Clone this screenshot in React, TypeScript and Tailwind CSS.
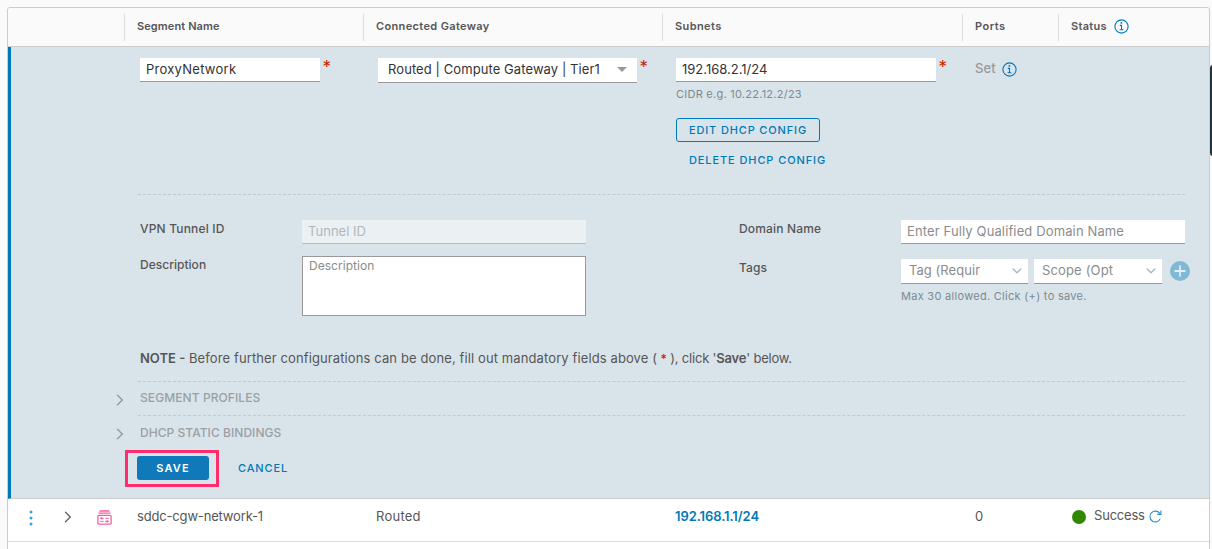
import type { ReactNode } from "react";

function InfoIcon() {
  return (
    <svg width="15" height="15" viewBox="0 0 15 15" fill="none" stroke="#0079b8" className="shrink-0">
      <circle cx="7.5" cy="7.5" r="6.6" strokeWidth="1.1" />
      <path d="M5.8 6.4H7.5V10.6M5.6 10.8H9.4" strokeWidth="1.1" />
      <circle cx="7.4" cy="3.9" r="0.9" fill="#0079b8" stroke="none" />
    </svg>
  );
}

function Chevron({ className }: { className: string }) {
  return (
    <svg width="8" height="12" viewBox="0 0 8 12" fill="none" className={className}>
      <path d="M1.5 1.3L6.3 6L1.5 10.7" stroke="currentColor" strokeWidth="1.4" strokeLinecap="round" />
    </svg>
  );
}

function DownChevron() {
  return (
    <svg width="10" height="6" viewBox="0 0 10 6" fill="none">
      <path d="M1.2 1L5 4.8L8.8 1" stroke="#a9b6be" strokeWidth="1.3" strokeLinecap="round" />
    </svg>
  );
}

function SegmentIcon() {
  return (
    <svg width="15" height="15" viewBox="0 0 15 15" fill="none" stroke="#f4609f">
      <path d="M2.5 1H12.5M1.5 3.2H13.5" strokeWidth="1.3" />
      <rect x="0.9" y="5.3" width="13.2" height="8.9" rx="0.9" strokeWidth="1.3" />
      <path d="M3.2 8.3H6.8M8.2 8.3H11.8M3.2 11.4H6.6M8 11.4H11.8" strokeWidth="1" />
      <path d="M5.3 6.7V9.9L3 8.3ZM9.7 9.8V13L12 11.4Z" fill="#f4609f" stroke="none" />
    </svg>
  );
}

function RefreshIcon() {
  return (
    <svg width="13" height="13" viewBox="0 0 13 13" fill="none" stroke="#2b90c6" strokeWidth="1.1">
      <path d="M11.3 8.6A5.4 5.4 0 1 1 10.9 3.6" />
      <path d="M11.9 0.6V4.4H8.2" />
    </svg>
  );
}

function Required() {
  return <span className="ml-[2.5px] h-4 text-[17px] leading-[18px] text-[#c92100]">*</span>;
}

function HeaderCell({ children }: { children: ReactNode }) {
  return (
    <div className="flex h-[27px] items-center border-l border-[#ddd] pb-0.5 pl-3 text-[11px] font-semibold leading-4 text-[#565656]">
      {children}
    </div>
  );
}

const columns = "grid grid-cols-[116px_239px_299px_300px_96px_1fr]";

export default function App() {
  return (
    <div className="h-[549px] w-[1212px] overflow-hidden bg-[#fafafa] pl-[7px] pt-[7px] font-['Inter',sans-serif] text-[13px] text-[#565656]">
      <div className="flex">
        <div className="h-[550px] w-[1203px] shrink-0 rounded-[3px] border border-[#ccc] bg-white">
          <div className={`${columns} h-[39px] items-center rounded-t-[3px] border-b border-[#ccc] bg-[#fafafa]`}>
            <div />
            <HeaderCell><span className="tracking-[0.1px]">Segment Name</span></HeaderCell>
            <HeaderCell><span className="tracking-[0.36px]">Connected Gateway</span></HeaderCell>
            <HeaderCell><span className="tracking-[0.4px]">Subnets</span></HeaderCell>
            <HeaderCell><span className="tracking-[0.5px]">Ports</span></HeaderCell>
            <HeaderCell>
              <span className="mr-[7px] tracking-[0.3px]">Status</span>
              <InfoIcon />
            </HeaderCell>
          </div>

          <div className="flex h-[452px] flex-col border-b border-l-[3px] border-b-[#ccc] border-l-[#0079b8] bg-[#d9e4ea]">
            <div className={`${columns} -ml-[3px] h-[147px] pt-[11px]`}>
              <div />
              <div className="flex items-start pl-4">
                <div className="h-6 w-[180px] border-b border-[#999] bg-white pl-1.5 leading-[23px] tracking-[0.26px] text-[#333]">ProxyNetwork</div>
                <Required />
              </div>
              <div className="flex items-start pl-[15px]">
                <div className="flex h-[25px] w-[259px] items-center justify-between border-b border-[#999] bg-white pl-2.5 pr-[10px] text-[#333]">
                  <span className="whitespace-nowrap tracking-[0.085px]">Routed | Compute Gateway | Tier1</span>
                  <svg className="mb-px shrink-0" width="10" height="5" viewBox="0 0 10 5"><path d="M0 0H10L5 5Z" fill="#999" /></svg>
                </div>
                <Required />
              </div>
              <div className="flex flex-col items-start pl-[14px]">
                <div className="flex items-start">
                  <div className="h-6 w-[260px] border-b border-[#999] bg-white pl-1.5 leading-[23px] text-[#333]">192.168.2.1/24</div>
                  <Required />
                </div>
                <div className="mt-1 text-[11px] leading-4 tracking-[0.25px] text-[#7c8a93]">CIDR e.g. 10.22.12.2/23</div>
                <div className="mt-4 flex h-6 w-[144px] items-center rounded-[3px] border border-[#0079b8] pl-3 text-[11px] font-medium tracking-[0.85px] text-[#0079b8]">
                  <span className="whitespace-nowrap">EDIT DHCP CONFIG</span>
                </div>
                <div className="ml-[13px] mt-[10px] whitespace-nowrap text-[11px] font-medium leading-4 tracking-[0.9px] text-[#0079b8]">DELETE DHCP CONFIG</div>
              </div>
              <div className="flex h-[22px] items-center pl-[13px]">
                <span className="mr-1.5 font-medium tracking-[0.1px] text-[#999]">Set</span>
                <InfoIcon />
              </div>
              <div />
            </div>

            <div className="ml-[127px] mr-6 border-t border-dashed border-[#c3c8ca]" />

            <div className="flex h-[150px] pl-[129px] pt-[25px]">
              <div className="w-[599px]">
                <div className="flex h-9">
                  <div className="w-[162px] pt-px text-[12px] font-medium leading-4 tracking-[0.17px]">VPN Tunnel ID</div>
                  <div className="h-6 w-[284px] border-b border-[#b5bec3] bg-[#ebf0f3] pl-1.5 leading-[23px] tracking-[0.03px] text-[#b0b8bc]">Tunnel ID</div>
                </div>
                <div className="flex">
                  <div className="w-[162px] pt-px text-[12px] font-medium leading-4 tracking-[0.02px]">Description</div>
                  <div className="h-[60px] w-[284px] border border-[#999] bg-white pl-1.5 pt-px text-[12px] leading-4 tracking-[0.03px] text-[#8c8c8c]">Description</div>
                </div>
              </div>
              <div>
                <div className="flex h-[39px]">
                  <div className="w-[162px] pt-px text-[12px] font-medium leading-4 tracking-[0.16px]">Domain Name</div>
                  <div className="h-6 w-[284px] border-b border-[#999] bg-white pl-1.5 leading-[23px] tracking-[0.13px] text-[#8c8c8c]">Enter Fully Qualified Domain Name</div>
                </div>
                <div className="flex">
                  <div className="w-[162px] pt-px text-[12px] font-medium leading-4 tracking-[0.1px]">Tags</div>
                  <div>
                    <div className="flex items-center">
                      <div className="flex h-[25px] w-[127px] items-center justify-between border-b border-[#999] bg-white pl-2 pr-1.5 text-[#8c8c8c]">
                        <span className="tracking-[0.05px]">Tag (Requir</span>
                        <DownChevron />
                      </div>
                      <div className="ml-1.5 flex h-[25px] w-[128px] items-center justify-between border-b border-[#999] bg-white pl-2 pr-1.5 text-[#8c8c8c]">
                        <span className="tracking-[0.15px]">Scope (Opt</span>
                        <DownChevron />
                      </div>
                      <svg className="mb-0.5 ml-2" width="20" height="20" viewBox="0 0 20 20">
                        <circle cx="10" cy="10" r="10" fill="#80b9d7" />
                        <path d="M10 5.2V14.8M5.2 10H14.8" stroke="#e4eef4" strokeWidth="1.8" strokeLinecap="round" />
                      </svg>
                    </div>
                    <div className="mt-[4px] text-[11px] leading-4 tracking-[0.29px] text-[#7c8a93]">Max 30 allowed. Click (+) to save.</div>
                  </div>
                </div>
              </div>
            </div>

            <div className="flex h-9 items-start whitespace-pre pl-[129px] pt-[5px] leading-4">
              <span className="font-semibold">NOTE -</span>
              <span className="tracking-[0.11px]"> Before further configurations can be done, fill out mandatory fields above (</span>
              <span className="tracking-[-0.2px]"> <span className="text-[12px] font-semibold text-[#e12200]">*</span> ), click '<b className="font-semibold">Save</b>' below.</span>
            </div>

            <div className="ml-[127px] mr-6 border-t border-dashed border-[#c3c8ca]" />
            <div className="flex h-[33px] pl-[105px] text-[12px] font-medium text-[#9aa0a3]">
              <Chevron className="mt-3 text-[#8f9ba3]" />
              <span className="ml-4 mt-2 leading-4 tracking-[0.08px]">SEGMENT PROFILES</span>
            </div>
            <div className="ml-[127px] mr-6 border-t border-dashed border-[#c3c8ca]" />
            <div className="flex h-[34px] pl-[105px] text-[12px] font-medium text-[#9aa0a3]">
              <Chevron className="mt-3 text-[#8f9ba3]" />
              <span className="ml-4 mt-[9px] leading-4 tracking-[0.05px]">DHCP STATIC BINDINGS</span>
            </div>

            <div className="flex items-center pl-[114px] text-[11px]">
              <div className="flex h-[37px] w-[94px] items-start border-[3px] border-[#ff2d6e] pl-[9px] pt-[3px]">
                <div className="flex h-6 w-[72px] items-center justify-center rounded-[3px] bg-[#0f79ba] font-semibold tracking-[1.1px] text-white">SAVE</div>
              </div>
              <span className="ml-[19px] font-medium tracking-[0.85px] text-[#0079b8]">CANCEL</span>
            </div>
          </div>

          <div className={`${columns} h-[43px] items-start border-b border-[#ddd] pt-[9px] leading-[18px]`}>
            <div className="flex h-[18px] items-center pl-[21px]">
              <svg className="mt-px" width="4" height="16" viewBox="0 0 4 16" fill="#35a5d7"><circle cx="2" cy="2" r="1.5" /><circle cx="2" cy="8" r="1.5" /><circle cx="2" cy="14" r="1.5" /></svg>
              <Chevron className="ml-[31px] text-[#666]" />
              <span className="ml-[25px]"><SegmentIcon /></span>
            </div>
            <div className="-mt-px pl-[13px] tracking-[-0.17px]">sddc-cgw-network-1</div>
            <div className="-mt-px pl-[13px] tracking-[0.25px]">Routed</div>
            <div className="-mt-px pl-[13px] font-semibold tracking-[-0.09px] text-[#0079b8]">192.168.1.1/24</div>
            <div className="-mt-px pl-[13px]">0</div>
            <div className="flex items-center pl-[14px]">
              <span className="mt-[2px] size-[14px] rounded-full bg-[#318700]" />
              <span className="-mt-0.5 ml-2 mr-[4px] tracking-[-0.2px]">Success</span>
              <RefreshIcon />
            </div>
          </div>
        </div>
        <div className="mt-[58px] h-[91px] w-2 shrink-0 rounded-[3px] bg-[#25333d]" />
      </div>
    </div>
  );
}
